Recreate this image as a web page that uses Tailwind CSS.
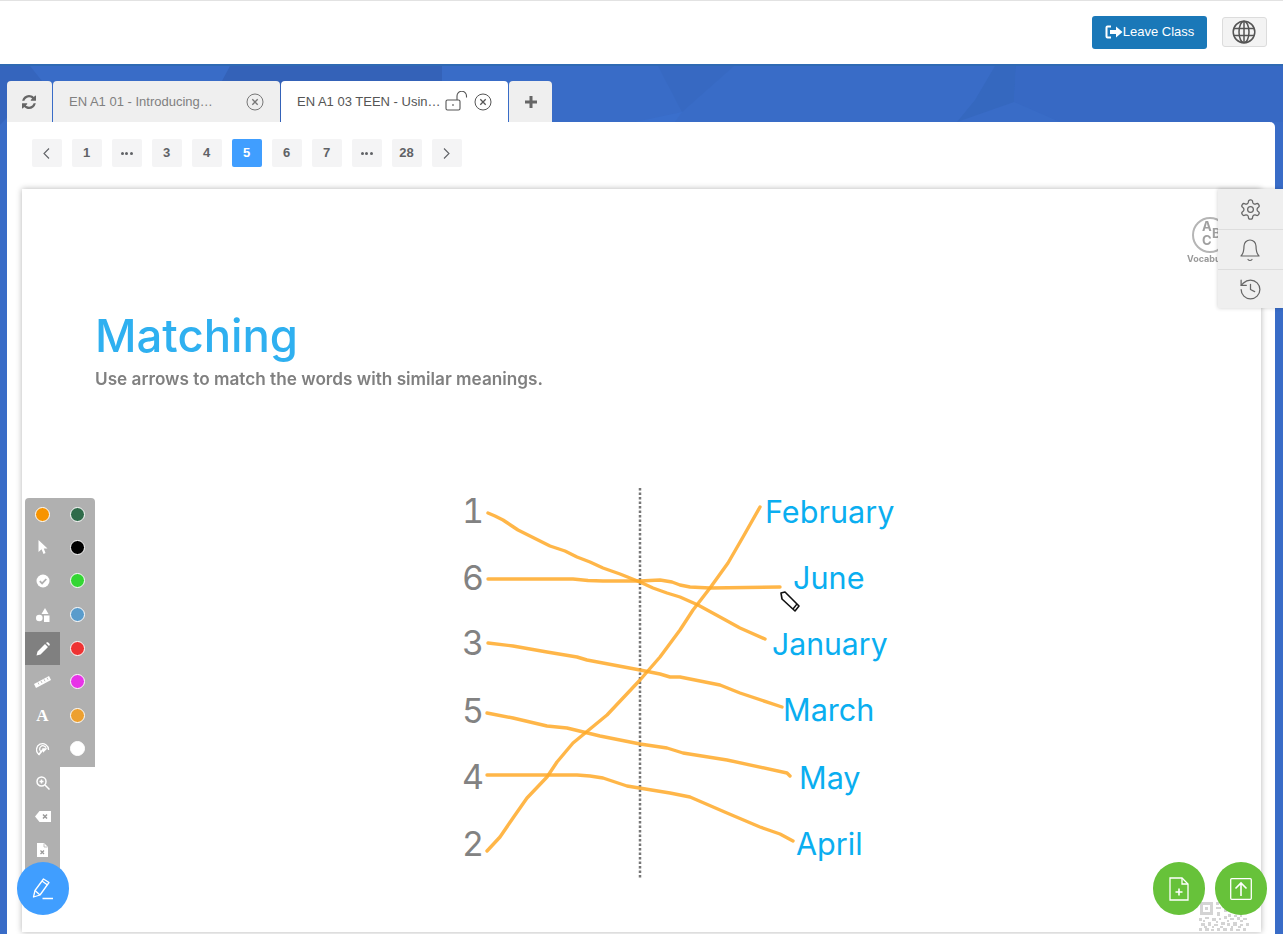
<!DOCTYPE html>
<html lang="en">
<head>
    <meta charset="UTF-8">
    <title>Classroom</title>
    <script src="https://cdn.jsdelivr.net/npm/@tailwindcss/browser@4"></script>
</head>
<body class="font-['Liberation_Sans',sans-serif]">
<div class="relative w-[1283px] h-[934px] overflow-hidden bg-[#396cc7]">

    <!-- background polygons -->
    <svg class="absolute left-0 top-0" width="1283" height="130" viewBox="0 0 1283 130">
        <polygon points="0,66 30,66 42,81 0,125" fill="#3565bd"/>
        <polygon points="230,66 442,66 442,81 300,122 200,122" fill="#3462b8"/>
        <polygon points="658,66 734,66 682,112" fill="#3769c2"/>
        <polygon points="682,112 635,122 675,122" fill="#3a6fcc"/>
        <polygon points="995,66 1016,66 1014,102 957,122 975,100" fill="#3568bf"/>
        <polygon points="1016,66 1283,66 1283,122 1060,122 1014,102" fill="#3769c4"/>
    </svg>

    <!-- header -->
    <header class="relative h-[66px] bg-white border-t border-t-[#e2e2e2] border-b-2 border-b-[#2f6ab3] flex items-center justify-end pr-4 pb-[1px]">
        <button class="w-[115px] h-[33px] mr-[15px] bg-[#1a78b8] rounded-[3px] text-white text-[13px] flex items-center justify-center">
            <svg width="18" height="16" viewBox="0 0 18 16" fill="none">
                <path d="M6 2.500H2.500Q1.500 2.500 1.500 3.500V12.500Q1.500 13.500 2.500 13.500H6" stroke="white" stroke-width="2"/>
                <path d="M5 6H11V2.500L17.500 8L11 13.500V10H5Z" fill="white"/>
            </svg>
            <span>Leave Class</span>
        </button>
        <button class="w-[45px] h-[30px] bg-[#f3f3f3] border border-[#dcdcdc] rounded-[3px] flex items-center justify-center pr-[1px]">
            <svg width="24" height="24" viewBox="0 0 24 24" fill="none" stroke="#555" stroke-width="1.500">
                <circle cx="12" cy="12" r="10.800"/>
                <ellipse cx="12" cy="12" rx="5" ry="10.800"/>
                <path d="M12 1.200V22.800M1.800 8.500H22.200M1.800 15.500H22.200"/>
            </svg>
        </button>
    </header>

    <!-- tabs -->
    <nav class="relative flex h-[41px] mt-[15px] ml-[7px] gap-[1px] text-[13px]">
        <div class="w-[45px] bg-[#efefef] rounded-t-[4px] flex items-center justify-center pr-[2px]">
            <svg width="14" height="14" viewBox="0 0 1536 1536" fill="#666"><path d="M1511 928q0 5-1 7-64 268-268 434.500t-478 166.500q-146 0-282.500-55t-243.500-157l-129 129q-19 19-45 19t-45-19-19-45v-448q0-26 19-45t45-19h448q26 0 45 19t19 45-19 45l-137 137q71 66 161 102t187 36q134 0 250-65t186-179q11-17 53-117 8-23 30-23h192q13 0 22.500 9.500t9.500 22.500zm25-800v448q0 26-19 45t-45 19h-448q-26 0-45-19t-19-45 19-45l138-138q-148-137-349-137-134 0-250 65t-186 179q-11 17-53 117-8 23-30 23h-199q-13 0-22.500-9.500t-9.500-22.500v-7q65-268 270-434.500t480-166.500q146 0 284 55.500t245 156.500l130-129q19-19 45-19t45 19 19 45z"/></svg>
        </div>
        <div class="w-[227px] bg-[#efefef] rounded-t-[4px] flex items-center pl-[16px] text-[#808080]">
            <span class="w-[146px] whitespace-nowrap">EN A1 01 - Introducing…</span>
            <svg class="ml-[31px]" width="18" height="18" viewBox="0 0 18 18" fill="none" stroke="#777" stroke-width="1"><circle cx="9" cy="9" r="8"/><path d="M6.300 6.300L11.700 11.700M11.700 6.300L6.300 11.700" stroke-width="1.300"/></svg>
        </div>
        <div class="w-[227px] bg-white rounded-t-[4px] flex items-center pl-[16px] text-[#555]">
            <span class="w-[144px] whitespace-nowrap">EN A1 03 TEEN - Usin…</span>
            <svg class="ml-[4px] -mt-[1px]" width="24" height="20" viewBox="0 0 24 20" fill="none" stroke="#555" stroke-width="1.100"><rect x="1" y="9" width="14" height="10" rx="1.500"/><path d="M8 13V15"/><path d="M12 9V5A4.500 4.500 0 0 1 21.500 5V6.500"/></svg>
            <svg class="ml-[5px]" width="18" height="18" viewBox="0 0 18 18" fill="none" stroke="#555" stroke-width="1"><circle cx="9" cy="9" r="8"/><path d="M6.300 6.300L11.700 11.700M11.700 6.300L6.300 11.700" stroke-width="1.300"/></svg>
        </div>
        <div class="w-[43px] bg-[#efefef] rounded-t-[4px] flex items-center justify-center">
            <svg width="12" height="12" viewBox="0 0 12 12" fill="#666"><path d="M4.500 0H7.500V4.500H12V7.500H7.500V12H4.500V7.500H0V4.500H4.500Z"/></svg>
        </div>
    </nav>

    <!-- panel -->
    <main class="relative ml-[7px] w-[1268px] h-[812px] bg-white rounded-tr-[5px] pt-[17px]">
        <div class="flex gap-[10px] pl-[25px] h-[28px] text-[13px] font-bold text-[#606266]">
            <div class="w-[30px] bg-[#f4f4f5] rounded-[2px] flex items-center justify-center pr-[1px]"><svg width="7" height="11" viewBox="0 0 7 11" fill="none" stroke="#606266" stroke-width="1.100"><path d="M6 0.500L1 5.500L6 10.500"/></svg></div>
            <div class="w-[30px] bg-[#f4f4f5] rounded-[2px] flex items-center justify-center pr-[1px]">1</div>
            <div class="w-[30px] bg-[#f4f4f5] rounded-[2px] flex items-center justify-center gap-[1.500px] pr-[1px]"><i class="w-[3px] h-[3px] rounded-full bg-[#606266]"></i><i class="w-[3px] h-[3px] rounded-full bg-[#606266]"></i><i class="w-[3px] h-[3px] rounded-full bg-[#606266]"></i></div>
            <div class="w-[30px] bg-[#f4f4f5] rounded-[2px] flex items-center justify-center pr-[1px]">3</div>
            <div class="w-[30px] bg-[#f4f4f5] rounded-[2px] flex items-center justify-center pr-[1px]">4</div>
            <div class="w-[30px] bg-[#409eff] rounded-[2px] flex items-center justify-center text-white pr-[1px]">5</div>
            <div class="w-[30px] bg-[#f4f4f5] rounded-[2px] flex items-center justify-center pr-[1px]">6</div>
            <div class="w-[30px] bg-[#f4f4f5] rounded-[2px] flex items-center justify-center pr-[1px]">7</div>
            <div class="w-[30px] bg-[#f4f4f5] rounded-[2px] flex items-center justify-center gap-[1.500px] pr-[1px]"><i class="w-[3px] h-[3px] rounded-full bg-[#606266]"></i><i class="w-[3px] h-[3px] rounded-full bg-[#606266]"></i><i class="w-[3px] h-[3px] rounded-full bg-[#606266]"></i></div>
            <div class="w-[30px] bg-[#f4f4f5] rounded-[2px] flex items-center justify-center pr-[1px]">28</div>
            <div class="w-[30px] bg-[#f4f4f5] rounded-[2px] flex items-center justify-center pr-[1px]"><svg width="7" height="11" viewBox="0 0 7 11" fill="none" stroke="#606266" stroke-width="1.100"><path d="M1 0.500L6 5.500L1 10.500"/></svg></div>
        </div>

        <!-- slide: free canvas, offsets are page coords minus (22,189) -->
        <section class="relative mt-[22px] ml-[15px] w-[1239px] h-[743px] bg-white shadow-[0_0_6px_rgba(0,0,0,0.3)] font-['Inter',sans-serif]">
            <h1 class="absolute left-[73px] top-[118px] text-[45.500px] leading-[58px] font-medium text-[#2fb0f0] blur-[0.5px]">Matching</h1>
            <p class="absolute left-[73px] top-[179px] text-[17.200px] leading-[22px] font-semibold text-[#808080] blur-[0.4px]">Use arrows to match the words with similar meanings.</p>

            <!-- vocabulary badge -->
            <div class="absolute left-[1170px] top-[28px] w-[36px] h-[36px] rounded-full border-2 border-[#b5b5b5] blur-[0.3px]"></div>
            <span class="absolute left-[1180px] top-[31px] text-[13px] leading-[13px] font-bold text-[#a0a0a0] blur-[0.3px]">A</span>
            <span class="absolute left-[1190px] top-[38px] text-[13px] leading-[13px] font-bold text-[#a0a0a0] blur-[0.3px]">B</span>
            <span class="absolute left-[1180px] top-[45px] text-[13px] leading-[13px] font-bold text-[#a0a0a0] blur-[0.3px]">C</span>
            <span class="absolute left-[1165px] top-[64px] text-[9px] leading-[12px] font-bold text-[#999] blur-[0.3px]">Vocabulary</span>

            <!-- numbers -->
            <span class="absolute left-[440px] top-[302px] text-[34px] leading-[40px] text-[#828282] tabular-nums">1</span>
            <span class="absolute left-[440px] top-[369px] text-[34px] leading-[40px] text-[#828282] tabular-nums">6</span>
            <span class="absolute left-[440px] top-[434px] text-[34px] leading-[40px] text-[#828282] tabular-nums">3</span>
            <span class="absolute left-[440px] top-[502px] text-[34px] leading-[40px] text-[#828282] tabular-nums">5</span>
            <span class="absolute left-[440px] top-[568px] text-[34px] leading-[40px] text-[#828282] tabular-nums">4</span>
            <span class="absolute left-[440px] top-[635px] text-[34px] leading-[40px] text-[#828282] tabular-nums">2</span>

            <!-- months -->
            <span class="absolute left-[743px] top-[303px] text-[30.600px] leading-[40px] text-[#0aaef0]">February</span>
            <span class="absolute left-[771px] top-[369px] text-[30.600px] leading-[40px] text-[#0aaef0]">June</span>
            <span class="absolute left-[750px] top-[435px] text-[30.200px] leading-[40px] text-[#0aaef0]">January</span>
            <span class="absolute left-[761px] top-[501px] text-[30.600px] leading-[40px] text-[#0aaef0]">March</span>
            <span class="absolute left-[777px] top-[569px] text-[30.600px] leading-[40px] text-[#0aaef0]">May</span>
            <span class="absolute left-[774px] top-[635px] text-[30.600px] leading-[40px] text-[#0aaef0]">April</span>

            <!-- divider and drawn lines -->
            <svg class="absolute left-0 top-0" width="1239" height="743" viewBox="22 189 1239 743" fill="none">
                <path d="M640 488V878" stroke="#777" stroke-width="2.500" stroke-dasharray="2.500 2"/>
                <g stroke="#ffa928" stroke-opacity="0.85" stroke-width="3.400" stroke-linecap="round" stroke-linejoin="round">
                    <path d="M488 513L495 516L503 520L518 530L534 538L550 546L565 551L577 557L590 562L603 568L620 574L640 582L653 588L667 593L680 597L698 605L720 617L740 628L765 639"/>
                    <path d="M488 579L573 579L588 580.500L603 581L640 581L660 580L672 582L680 585L690 587L710 588L780 587"/>
                    <path d="M488 643L513 646L547 652L577 657L587 660L640 670L660 674L670 677L680 677L720 685L740 693L782 707"/>
                    <path d="M487 713L513 718L547 726L567 728L600 736L640 744L667 748L683 753L727 760L787 773L790 776"/>
                    <path d="M487 775L577 775L590 776L603 778L627 786L670 793L690 797L727 813L760 827L780 834L793 841"/>
                    <path d="M487 851L500 837L513 818L527 798L547 777L557 762L573 743L590 729L607 715L640 680L660 657L680 630L693 610L710 588L728 563L743 537L760 507"/>
                </g>
                <!-- pen cursor -->
                <path d="M781 593L785 592L799 606L795 611L782 599Z" fill="white" stroke="#111" stroke-width="1.600" stroke-linejoin="round"/>
                <path d="M797 604L793 609" stroke="#111" stroke-width="1.400"/>
                <!-- qr code -->
                <g class="blur-[0.5px]" fill="#d4d4d4">
                    <path d="M1200 902h13v13h-13zM1203 905v7h7v-7z" fill-rule="evenodd"/>
                    <path d="M1205 907h3v3h-3z"/>
                    <path d="M1216 902h3v3h-3zM1222 902h2v5h-2zM1216 907h5v2h-5zM1224 909h3v3h-3zM1217 912h3v4h-3zM1228 914h3v3h-3zM1234 915h3v2h-3zM1240 914h2v3h-2zM1199 918h3v3h-3zM1205 917h4v2h-4zM1212 918h4v3h-4zM1219 918h2v2h-2zM1224 916h3v3h-3zM1230 918h4v2h-4zM1237 917h3v3h-3zM1243 918h4v2h-4zM1201 923h4v3h-4zM1208 922h3v4h-3zM1214 924h4v2h-4zM1221 922h4v3h-4zM1227 923h3v3h-3zM1233 922h4v4h-4zM1240 924h3v2h-3zM1246 923h3v3h-3zM1199 928h3v3h-3zM1205 928h4v3h-4zM1211 929h3v2h-3zM1217 928h3v3h-3zM1223 928h4v3h-4zM1230 928h3v3h-3zM1236 929h4v2h-4zM1243 928h3v3h-3zM1203 920h2v2h-2zM1216 921h2v2h-2zM1227 920h2v2h-2zM1240 920h3v2h-3zM1204 926h3v2h-3zM1212 926h2v2h-2zM1220 926h3v2h-3zM1231 926h2v2h-2zM1238 926h3v2h-3z"/>
                </g>
            </svg>
        </section>
    </main>

    <!-- side panel -->
    <aside class="absolute left-[1218px] top-[189px] w-[65px] h-[119px] bg-[#efefef] shadow-[0_0_4px_rgba(0,0,0,0.2)] flex flex-col">
        <div class="h-[41px] border-b border-[#dddddd] flex items-center justify-center pr-[1px]">
            <svg width="23" height="23" viewBox="0 0 24 24" fill="none" stroke="#666" stroke-width="1.300" stroke-linecap="round" stroke-linejoin="round"><path d="M12.220 2h-.44a2 2 0 0 0-2 2v.18a2 2 0 0 1-1 1.730l-.43.25a2 2 0 0 1-2 0l-.15-.08a2 2 0 0 0-2.730.73l-.22.38a2 2 0 0 0 .73 2.730l.15.1a2 2 0 0 1 1 1.720v.51a2 2 0 0 1-1 1.740l-.15.09a2 2 0 0 0-.73 2.730l.22.38a2 2 0 0 0 2.730.73l.15-.08a2 2 0 0 1 2 0l.43.25a2 2 0 0 1 1 1.730V20a2 2 0 0 0 2 2h.44a2 2 0 0 0 2-2v-.18a2 2 0 0 1 1-1.730l.43-.25a2 2 0 0 1 2 0l.15.08a2 2 0 0 0 2.730-.73l.22-.39a2 2 0 0 0-.73-2.730l-.15-.08a2 2 0 0 1-1-1.740v-.5a2 2 0 0 1 1-1.740l.15-.09a2 2 0 0 0 .73-2.730l-.22-.38a2 2 0 0 0-2.730-.73l-.15.08a2 2 0 0 1-2 0l-.43-.25a2 2 0 0 1-1-1.730V4a2 2 0 0 0-2-2z"/><circle cx="12" cy="12" r="3"/></svg>
        </div>
        <div class="h-[40px] border-b border-[#dddddd] flex items-center justify-center pr-[1px]">
            <svg width="24" height="24" viewBox="0 0 24 24" fill="none" stroke="#666" stroke-width="1.200" stroke-linecap="round" stroke-linejoin="round"><path d="M6 8a6 6 0 0 1 12 0c0 7 3 10 3 10H3s3-3 3-10"/><path d="M10 21.500a2.500 2.500 0 0 0 4 0"/></svg>
        </div>
        <div class="h-[38px] flex items-center justify-center pr-[1px]">
            <svg width="25" height="25" viewBox="0 0 24 24" fill="none" stroke="#666" stroke-width="1.200" stroke-linecap="round" stroke-linejoin="round"><path d="M3 12a9 9 0 1 0 9-9 9.750 9.750 0 0 0-6.740 2.740L3 8"/><path d="M3 3v5h5"/><path d="M12 7v5l4 2"/></svg>
        </div>
    </aside>

    <!-- drawing toolbar -->
    <div class="absolute left-[25px] top-[498px] flex items-start">
        <div class="w-[35px] h-[390px] bg-[#b0b0b0] rounded-tl-[4px] flex flex-col">
            <div class="h-[32.600px] flex items-center justify-center"><span class="w-[15px] h-[15px] rounded-full bg-[#f79400] border-[1.500px] border-white"></span></div>
            <div class="h-[33.600px] flex items-center justify-center"><svg width="10" height="14" viewBox="0 0 10 14" fill="white"><path d="M0.500 0L9.500 8.500H5.800L7.500 13L5.500 14L3.600 9.300L0.500 12Z"/></svg></div>
            <div class="h-[33.600px] flex items-center justify-center"><svg width="14" height="14" viewBox="0 0 14 14"><circle cx="7" cy="7" r="6.500" fill="white"/><path d="M3.800 7.200L6.100 9.400L10.300 5" fill="none" stroke="#b0b0b0" stroke-width="1.800"/></svg></div>
            <div class="h-[33.600px] flex items-center justify-center"><svg width="14" height="14" viewBox="0 0 14 14" fill="white"><path d="M9 0L12.500 6H5.500Z"/><circle cx="3.300" cy="10" r="3.300"/><rect x="8" y="7.500" width="5.500" height="6.500"/></svg></div>
            <div class="h-[33.600px] mt-[0.500px] bg-[#808080] flex items-center justify-center"><svg width="14" height="14" viewBox="0 0 14 14" fill="white"><path d="M0.500 13.500L1.500 9.500L9 2L12 5L4.500 12.500ZM10 1L11 0.300Q11.700 0 12.300 0.500L13.500 1.700Q14 2.300 13.700 3L13 4Z"/></svg></div>
            <div class="h-[33.100px] flex items-center justify-center"><svg width="17" height="12" viewBox="0 0 17 12"><path d="M0 8L15 0L17 4L2 12Z" fill="white"/><path d="M4 6.500L5 8.500M7 5L8 7M10 3.300L11 5.300M13 1.700L14 3.700" stroke="#b0b0b0" stroke-width="0.800"/></svg></div>
            <div class="h-[33.600px] flex items-center justify-center font-['Liberation_Serif',serif] font-bold text-[17px] text-white">A</div>
            <div class="h-[33.600px] flex items-center justify-center"><svg width="14" height="14" viewBox="0 0 14 14" fill="none" stroke="white" stroke-width="1.300"><path d="M3 12.500A6 6 0 1 1 12.500 8"/><path d="M5.500 10A3.300 3.300 0 1 1 10 5.800"/><path d="M2.500 13L7 7.500" stroke-width="1.800"/><path d="M7 7H10L7.500 9.500Z" fill="white"/></svg></div>
            <div class="h-[33.600px] flex items-center justify-center"><svg width="14" height="14" viewBox="0 0 14 14" fill="none" stroke="white" stroke-width="1.500"><circle cx="5.500" cy="5.500" r="4.500"/><path d="M9 9L13.500 13.500M3.500 5.500H7.500M5.500 3.500V7.500" /></svg></div>
            <div class="h-[33.600px] flex items-center justify-center"><svg width="16" height="11" viewBox="0 0 16 11"><path d="M0 5.500L4.500 0H16V11H4.500Z" fill="white"/><path d="M8 3.500L12 7.500M12 3.500L8 7.500" stroke="#999" stroke-width="1.500"/></svg></div>
            <div class="h-[33.600px] flex items-center justify-center"><svg width="11" height="14" viewBox="0 0 11 14"><path d="M0 0H7L11 4V14H0Z" fill="white"/><path d="M7 0.500V4H10.500" fill="none" stroke="#b0b0b0" stroke-width="0.800"/><path d="M3.500 7.500L7 11M7 7.500L3.500 11" stroke="#999" stroke-width="1.300"/></svg></div>
        </div>
        <div class="w-[35px] h-[269px] bg-[#b0b0b0] rounded-tr-[4px] flex flex-col">
            <div class="h-[32.600px] flex items-center justify-center"><span class="w-[15px] h-[15px] rounded-full bg-[#2f6b4a] border-[1.500px] border-white"></span></div>
            <div class="h-[33.600px] flex items-center justify-center"><span class="w-[15px] h-[15px] rounded-full bg-[#000000] border-[1.500px] border-white"></span></div>
            <div class="h-[33.600px] flex items-center justify-center"><span class="w-[15px] h-[15px] rounded-full bg-[#33d633] border-[1.500px] border-white"></span></div>
            <div class="h-[33.600px] flex items-center justify-center"><span class="w-[15px] h-[15px] rounded-full bg-[#5a9ccc] border-[1.500px] border-white"></span></div>
            <div class="h-[33.600px] flex items-center justify-center"><span class="w-[15px] h-[15px] rounded-full bg-[#ee3333] border-[1.500px] border-white"></span></div>
            <div class="h-[33.600px] flex items-center justify-center"><span class="w-[15px] h-[15px] rounded-full bg-[#e833e8] border-[1.500px] border-white"></span></div>
            <div class="h-[33.600px] flex items-center justify-center"><span class="w-[15px] h-[15px] rounded-full bg-[#eda030] border-[1.500px] border-white"></span></div>
            <div class="h-[33.600px] flex items-center justify-center"><span class="w-[15px] h-[15px] rounded-full bg-white border-[1.500px] border-white"></span></div>
        </div>
    </div>

    <!-- floating buttons -->
    <button class="absolute left-[17px] top-[862px] w-[52px] h-[53px] rounded-full bg-[#409eff] flex items-center justify-center">
        <svg width="24" height="24" viewBox="0 0 24 24" fill="none" stroke="white" stroke-width="1.300" stroke-linejoin="round"><path d="M2.500 20L4 13.500L12.500 2L18 5.500L9 18Z"/><path d="M4 13.500L9 18M11 4L16.500 8"/><path d="M11.500 21.500H22" stroke-width="1.500"/></svg>
    </button>
    <button class="absolute left-[1153px] top-[862px] w-[52px] h-[53px] rounded-full bg-[#67c23a] flex items-center justify-center">
        <svg width="20" height="24" viewBox="0 0 20 24" fill="none" stroke="white" stroke-width="1.300"><path d="M1 1H13L19 7V23H1Z"/><path d="M13 1V7H19"/><path d="M6.500 15H13.500M10 11.500V18.500" stroke-width="1.600"/></svg>
    </button>
    <button class="absolute left-[1215px] top-[862px] w-[52px] h-[53px] rounded-full bg-[#67c23a] flex items-center justify-center">
        <svg width="22" height="22" viewBox="0 0 22 22" fill="none" stroke="white" stroke-width="1.300"><rect x="0.700" y="0.700" width="20.600" height="20.600" rx="1"/><path d="M11 18V5M5.500 10.500L11 5L16.500 10.500" stroke-width="1.600"/></svg>
    </button>
</div>
</body>
</html>
